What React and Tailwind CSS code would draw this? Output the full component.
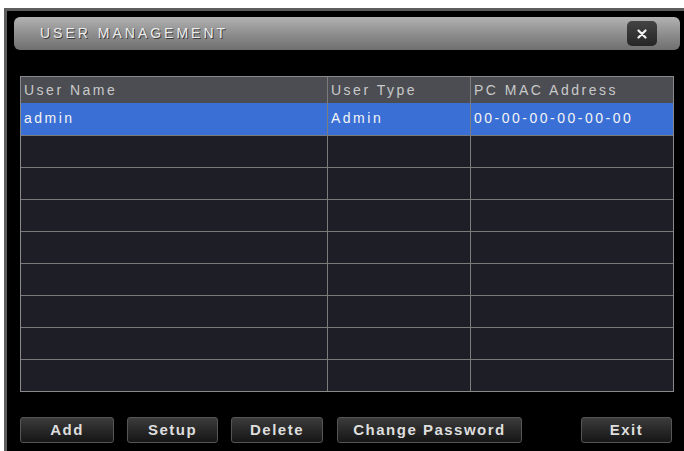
import React from "react";

const columns = [
  { label: "User Name", width: "w-[306px]" },
  { label: "User Type", width: "w-[143px]" },
  { label: "PC MAC Address", width: "flex-1" },
];

const users = [{ name: "admin", type: "Admin", mac: "00-00-00-00-00-00" }];

const buttons = [
  { label: "Add", className: "w-[94px]" },
  { label: "Setup", className: "w-[91px] ml-[13px]" },
  { label: "Delete", className: "w-[92px] ml-[13px]" },
  { label: "Change Password", className: "w-[185px] ml-[14px]" },
  { label: "Exit", className: "w-[91px] ml-auto mr-[2px]" },
];

const App = () => {
  const rows = [...users];
  while (rows.length < 9) rows.push(null);

  return (
    <div className="w-[684px] h-[451px] bg-white pl-1 pt-2 overflow-hidden flex font-['Liberation_Sans',Arial,sans-serif]">
      <div className="flex-1 flex flex-col bg-black border-l-[3px] border-t-[3px] border-[#5e5e5e] pl-[7px] pr-[4px] pt-[6px]">
        {/* Title bar */}
        <div className="h-[33px] rounded-[6px] bg-gradient-to-b from-[#b2b2b2] via-[#8f8f8f] to-[#6f6f6f] flex items-center pl-[26px] pr-[23px]">
          <span className="text-[14px] tracking-[3px] text-[#ececec] [text-shadow:1px_1px_0_#3a3a3a]">
            USER MANAGEMENT
          </span>
          <button className="ml-auto w-[30px] h-[25px] rounded-[5px] bg-gradient-to-b from-[#444] to-[#262626] flex items-center justify-center">
            <svg width="10" height="10" viewBox="0 0 10 10">
              <path d="M1.5 1.5L8.5 8.5M8.5 1.5L1.5 8.5" stroke="#f2f2f2" strokeWidth="2.2" strokeLinecap="round" />
            </svg>
          </button>
        </div>

        {/* User table */}
        <div className="mt-[26px] ml-[6px] w-[654px] border border-[#8a8a8a] text-[14px] tracking-[2.5px]">
          <div className="flex h-[26px] bg-[#4b4d53] text-[#c9c9c9]">
            {columns.map((col, i) => (
              <div
                key={col.label}
                className={`${col.width} flex items-center pl-[3px] ${i > 0 ? "border-l border-[#7c7c7c]" : ""}`}
              >
                {col.label}
              </div>
            ))}
          </div>
          {rows.map((user, r) => (
            <div
              key={r}
              className={`flex h-[32px] ${r > 0 ? "border-t border-[#7a7a7a]" : ""} ${
                user ? "bg-[#3a6fd6] text-[#f4f4f4] items-start" : "bg-[#1e1f26]"
              }`}
            >
              {columns.map((col, i) => (
                <div
                  key={col.label}
                  className={`${col.width} h-full pl-[3px] pt-[5px] ${i > 0 ? "border-l border-[#7c7c7c]" : ""}`}
                >
                  {user ? [user.name, user.type, user.mac][i] : ""}
                </div>
              ))}
            </div>
          ))}
        </div>

        {/* Buttons */}
        <div className="mt-[25px] ml-[6px] w-[654px] flex">
          {buttons.map((b) => (
            <button
              key={b.label}
              className={`${b.className} h-[26px] rounded-[3px] border border-[#555] bg-gradient-to-b from-[#3c3c3c] to-[#161616] text-[#dedede] text-[15px] font-bold tracking-[1.5px] flex items-center justify-center`}
            >
              {b.label}
            </button>
          ))}
        </div>
      </div>
    </div>
  );
};

export default App;
